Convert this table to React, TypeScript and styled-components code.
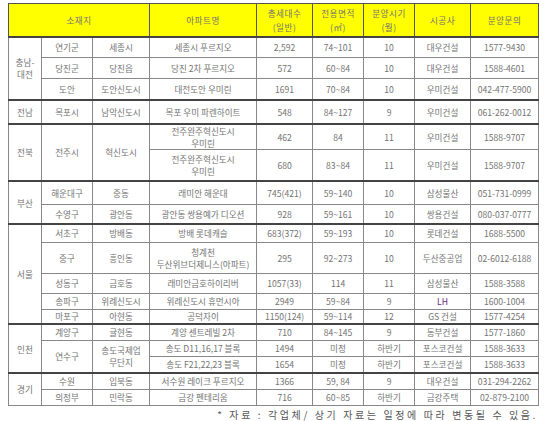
import { createGlobalStyle, styled } from 'styled-components';

type CellData = {
  text: string;
  rowSpan?: number;
  colSpan?: number;
  tone?: 'purple';
};

type RowData = {
  height: number;
  group?: boolean;
  cells: CellData[];
};

const c = (text: string, rowSpan?: number, tone?: 'purple'): CellData => ({ text, rowSpan, tone });

const columnWidths = [33, 51, 57, 107, 56, 51, 51, 56, 68];

const rows: RowData[] = [
  {
    height: 21,
    group: true,
    cells: [c('충남-\n대전', 3), c('연기군'), c('세종시'), c('세종시 푸르지오'), c('2,592'), c('74~101'), c('10'), c('대우건설'), c('1577-9430')],
  },
  { height: 21, cells: [c('당진군'), c('당진읍'), c('당진 2차 푸르지오'), c('572'), c('60~84'), c('10'), c('대우건설'), c('1588-4601')] },
  { height: 21, cells: [c('도안'), c('도안신도시'), c('대전도안 우미린'), c('1691'), c('70~84'), c('10'), c('우미건설'), c('042-477-5900')] },
  {
    height: 24,
    group: true,
    cells: [c('전남'), c('목포시'), c('남악신도시'), c('목포 우미 파렌하이트'), c('548'), c('84~127'), c('9'), c('우미건설'), c('061-262-0012')],
  },
  {
    height: 25,
    group: true,
    cells: [c('전북', 2), c('전주시', 2), c('혁신도시', 2), c('전주완주혁신도시\n우미린'), c('462'), c('84'), c('11'), c('우미건설'), c('1588-9707')],
  },
  { height: 32, cells: [c('전주완주혁신도시\n우미린'), c('680'), c('83~84'), c('11'), c('우미건설'), c('1588-9707')] },
  {
    height: 23,
    group: true,
    cells: [c('부산', 2), c('해운대구'), c('중동'), c('래미안 해운대'), c('745(421)'), c('59~140'), c('10'), c('삼성물산'), c('051-731-0999')],
  },
  { height: 20, cells: [c('수영구'), c('광안동'), c('광안동 쌍용예가 디오션'), c('928'), c('59~161'), c('10'), c('쌍용건설'), c('080-037-0777')] },
  {
    height: 18,
    group: true,
    cells: [c('서울', 5), c('서초구'), c('방배동'), c('방배 롯데캐슬'), c('683(372)'), c('59~193'), c('10'), c('롯데건설'), c('1688-5500')],
  },
  { height: 31, cells: [c('중구'), c('흥인동'), c('청계천\n두산위브더제니스(아파트)'), c('295'), c('92~273'), c('10'), c('두산중공업'), c('02-6012-6188')] },
  { height: 20, cells: [c('성동구'), c('금호동'), c('래미안금호하이리버'), c('1057(33)'), c('114'), c('11'), c('삼성물산'), c('1588-3588')] },
  { height: 16, cells: [c('송파구'), c('위례신도시'), c('위례신도시 휴먼시아'), c('2949'), c('59~84'), c('9'), c('LH', undefined, 'purple'), c('1600-1004')] },
  { height: 15, cells: [c('마포구'), c('아현동'), c('공덕자이'), c('1150(124)'), c('59~114'), c('12'), c('GS 건설'), c('1577-4254')] },
  {
    height: 16,
    group: true,
    cells: [c('인천', 3), c('계양구'), c('귤현동'), c('계양 센트레빌 2차'), c('710'), c('84~145'), c('9'), c('동부건설'), c('1577-1860')],
  },
  { height: 16, cells: [c('연수구', 2), c('송도국제업\n무단지', 2), c('송도 D11,16,17 블록'), c('1494'), c('미정'), c('하반기'), c('포스코건설'), c('1588-3633')] },
  { height: 17, cells: [c('송도 F21,22,23 블록'), c('1654'), c('미정'), c('하반기'), c('포스코건설'), c('1588-3633')] },
  {
    height: 16,
    group: true,
    cells: [c('경기', 2), c('수원'), c('입북동'), c('서수원 레이크 푸르지오'), c('1366'), c('59, 84'), c('9'), c('대우건설'), c('031-294-2262')],
  },
  { height: 16, cells: [c('의정부'), c('민락동'), c('금강 펜테리움'), c('716'), c('60~85'), c('하반기'), c('금강주택'), c('02-879-2100')] },
];

const headers: { label: string; colSpan?: number }[] = [
  { label: '소재지', colSpan: 3 },
  { label: '아파트명' },
  { label: '총세대수\n(일반)' },
  { label: '전용면적\n(㎡)' },
  { label: '분양시기\n(월)' },
  { label: '시공사' },
  { label: '분양문의' },
];

export default function App() {
  return (
    <>
      <GlobalStyle />
      <Page>
        <Table>
          <colgroup>
            {columnWidths.map((w, i) => (
              <col key={i} style={{ width: w }} />
            ))}
          </colgroup>
          <thead>
            <HeadRow>
              {headers.map((h) => (
                <HeadCell key={h.label} colSpan={h.colSpan}>
                  {h.label}
                </HeadCell>
              ))}
            </HeadRow>
          </thead>
          <tbody>
            {rows.map((row, i) => (
              <Row key={i} $group={row.group} style={{ height: row.height }}>
                {row.cells.map((cell, j) => (
                  <Cell key={j} rowSpan={cell.rowSpan} colSpan={cell.colSpan} $tone={cell.tone}>
                    {cell.text}
                  </Cell>
                ))}
              </Row>
            ))}
          </tbody>
        </Table>
        <Note>* 자료 : 각업체/ 상기 자료는 일정에 따라 변동될 수 있음.</Note>
      </Page>
    </>
  );
}

const GlobalStyle = createGlobalStyle`
  body {
    margin: 0;
    background: #ffffff;
    font-family: "Noto Sans CJK KR", "Noto Sans", sans-serif;
  }
`;

const Page = styled.main`
  display: flex;
  flex-direction: column;
  width: 530px;
  padding: 3px 0 0 8px;
`;

const Table = styled.table`
  width: 530px;
  table-layout: fixed;
  border-collapse: collapse;
  border: 1px solid #444;
  color: #747474;
  font-size: 8.6px;
  line-height: 12px;
`;

const HeadRow = styled.tr`
  height: 33px;
  background: #ffff00;
`;

const HeadCell = styled.th`
  padding: 0;
  border: 1px solid #555;
  border-bottom: 2px solid #444;
  font-weight: 400;
  white-space: pre-line;
  line-height: 14px;
  letter-spacing: 0.5px;
  text-align: center;
  vertical-align: middle;
`;

const Row = styled.tr<{ $group?: boolean }>`
  td {
    border-top: ${(p) => (p.$group ? '2px solid #444' : '1px solid #888')};
  }
`;

const Cell = styled.td<{ $tone?: 'purple' }>`
  padding: 0;
  border: 1px solid #888;
  white-space: pre-line;
  text-align: center;
  vertical-align: middle;
  overflow: hidden;
  color: ${(p) => (p.$tone === 'purple' ? '#6a2a7a' : 'inherit')};
`;

const Note = styled.p`
  margin: 2px 0 0;
  text-align: right;
  font-size: 10px;
  line-height: 14px;
  letter-spacing: 2.6px;
  color: #555;
`;
